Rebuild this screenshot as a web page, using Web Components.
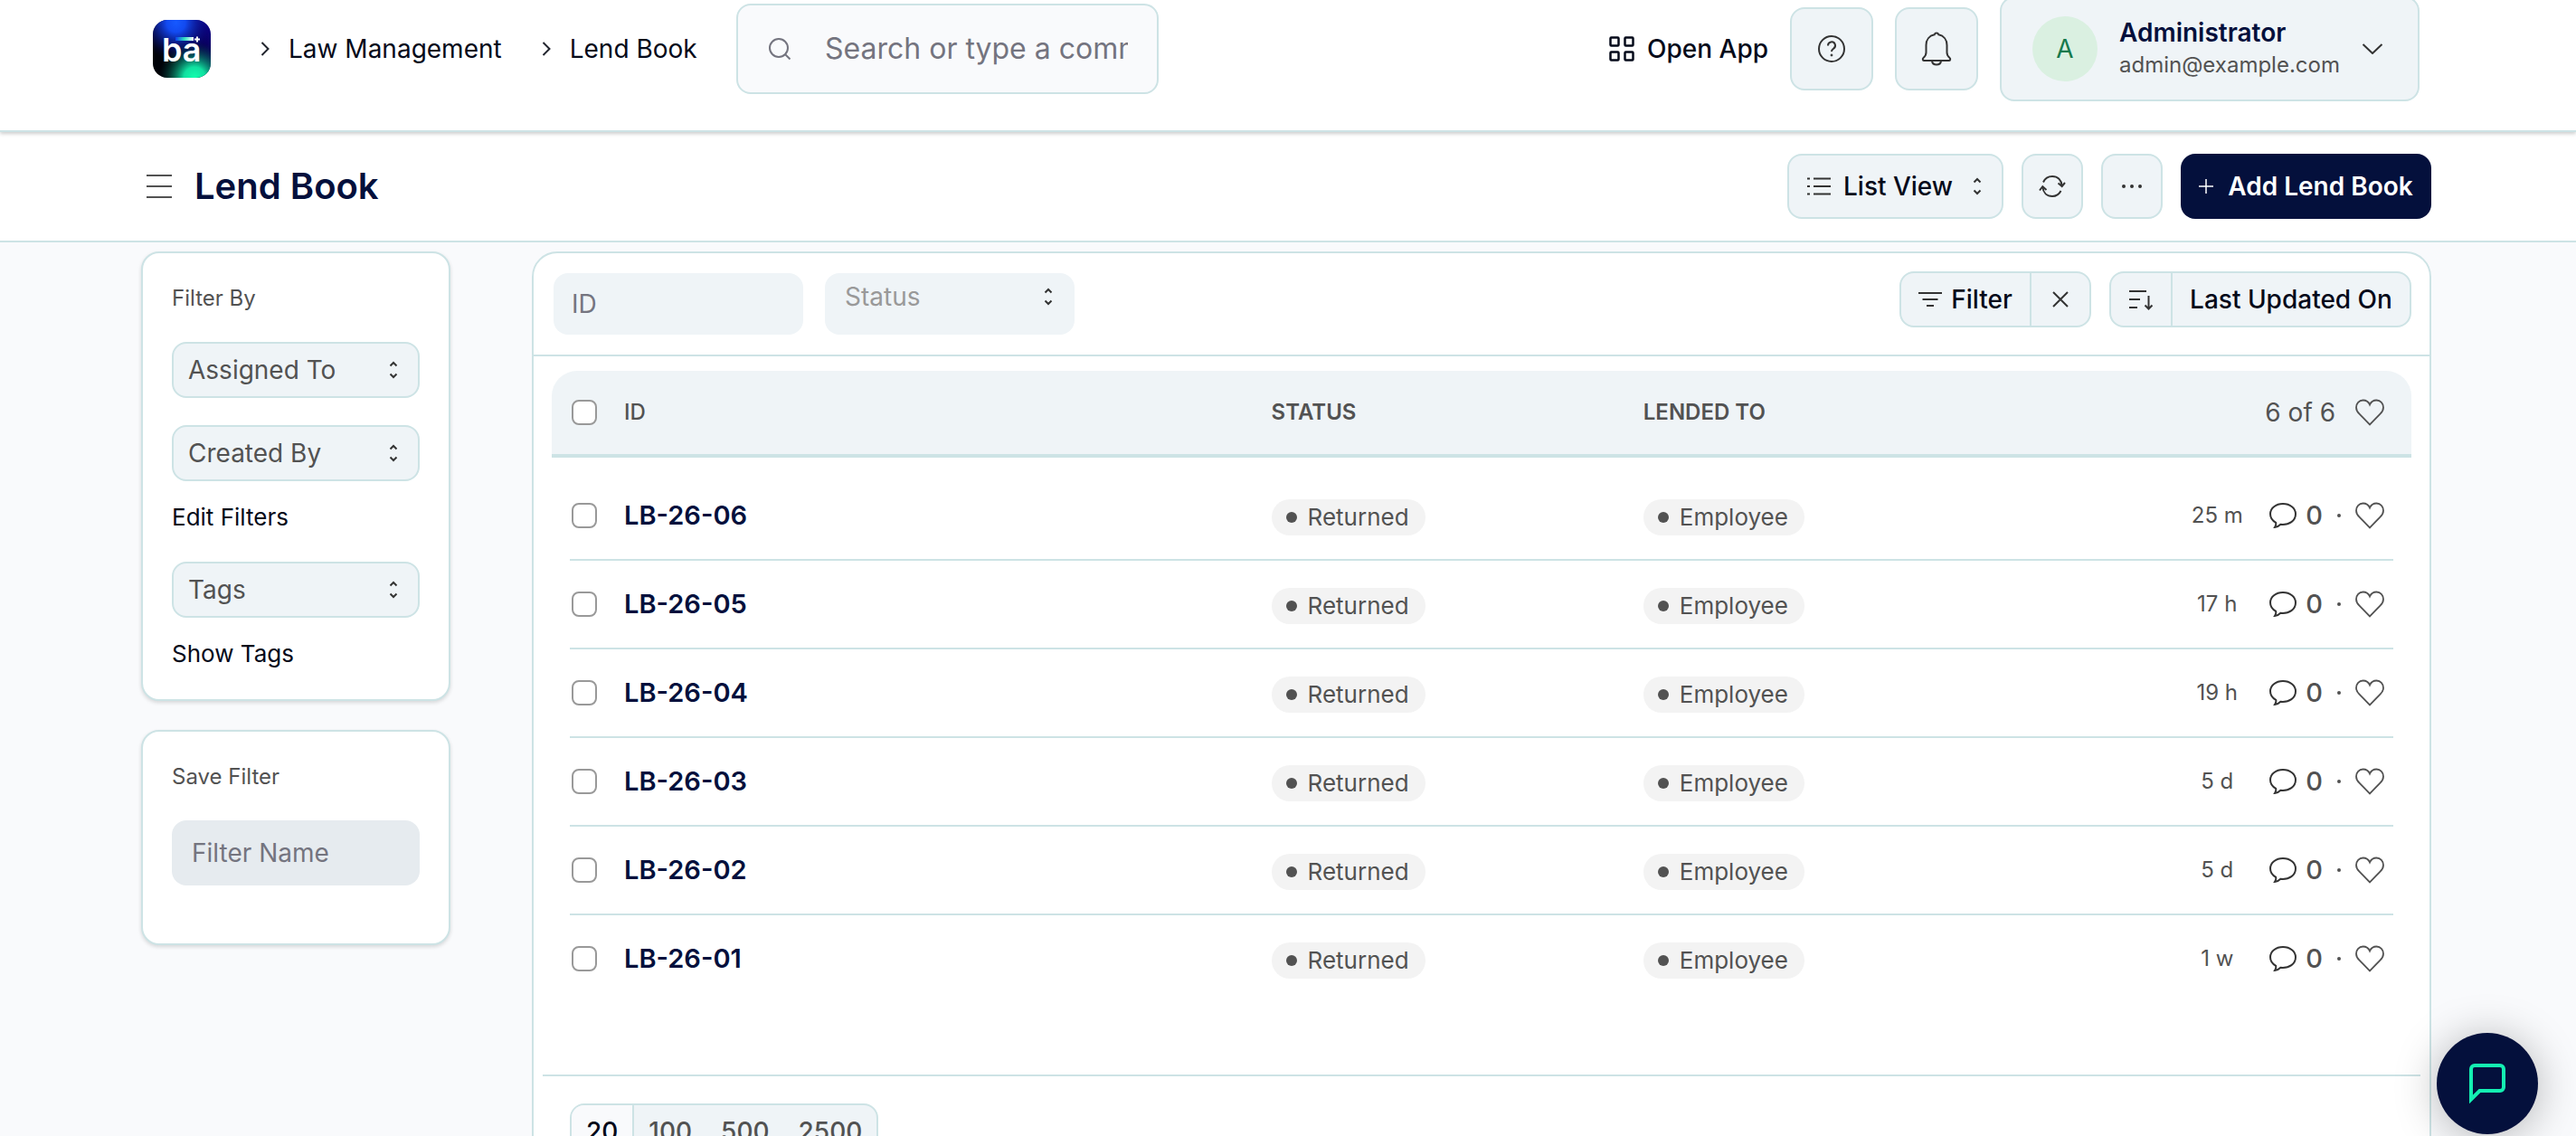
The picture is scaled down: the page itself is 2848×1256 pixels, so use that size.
<!DOCTYPE html>
<html lang="en">
<head>
<meta charset="utf-8">
<title>Lend Book</title>
<style>
  :root {
    --line: #cde3e5;
    --fill: #eff4f7;
    --page: #f9fafc;
    --navy: #04103c;
    --ink: #050a1a;
    --gray: #525252;
    --muted: #74747f;
    --radius: 16px;
  }
  body {
    margin: 0;
    height: 100vh;
    overflow: hidden;
    background: var(--page);
    color: var(--gray);
    font: 400 28px/32px Inter, "Liberation Sans", sans-serif;
  }
  .content {
    display: flex;
    align-items: flex-start;
    gap: 90px;
    padding: 10px 160px 0 156px;
  }
  aside {
    flex: 0 0 342px;
    display: grid;
    gap: 32px;
  }
</style>
</head>
<body>
  <lb-topbar>
    <lb-crumb href="#law">Law Management</lb-crumb>
    <lb-crumb href="#lend">Lend Book</lb-crumb>
  </lb-topbar>
  <lb-page-head>Lend Book</lb-page-head>
  <div class="content">
    <aside>
      <lb-panel heading="Filter By">
        <lb-select label="Assigned To"></lb-select>
        <lb-select label="Created By" class="next"></lb-select>
        <lb-link href="#filters">Edit Filters</lb-link>
        <lb-select label="Tags" class="tags"></lb-select>
        <lb-link href="#tags">Show Tags</lb-link>
      </lb-panel>
      <lb-panel heading="Save Filter">
        <lb-field label="Filter Name" class="save"></lb-field>
      </lb-panel>
    </aside>
    <lb-list></lb-list>
  </div>
  <lb-chat></lb-chat>

<script>
const ICONS = {
  chevron: [10, 16, `<path d="M1.5 1l7 7-7 7" stroke="#22252e"/>`],
  down: [24, 12, `<path d="M1.500 1L12 11 22.500 1"/>`],
  updown: [10, 20, `<path d="M1.500 5.500L5 2l3.500 3.500M1.500 14.500L5 18l3.500-3.500"/>`],
  search: [24, 24, `<circle cx="11" cy="11" r="10"/><path d="M18 18l5.500 5.500"/>`],
  grid: [28, 28, `<g stroke="#050a1a" stroke-width="2.500"><rect x="1.500" y="1.500" width="9" height="9" rx="1"/><rect x="17.500" y="1.500" width="9" height="9" rx="1"/><rect x="1.500" y="17.500" width="9" height="9" rx="1"/><rect x="17.500" y="17.500" width="9" height="9" rx="1"/></g>`],
  help: [30, 30, `<circle cx="15" cy="15" r="14"/><path d="M11 11.500a4 4 0 1 1 6 3.300c-1.400.8-2 1.500-2 3.200"/><circle cx="15" cy="22" r="1" fill="#333" stroke-width="1"/>`],
  bell: [34, 38, `<path d="M17 1.500c-1.300 0-2 .9-2.300 1.800C9 4.500 5.500 9 5.500 15v8c0 2.500-1 4.200-2.800 5.700-1.600 1.400-1 3.300.8 3.300h27c1.800 0 2.400-1.900.8-3.300-1.800-1.500-2.800-3.200-2.800-5.700v-8c0-6-3.500-10.500-9.200-11.700C19 2.400 18.300 1.500 17 1.500zM12 32.500c.4 2.600 2.400 4 5 4s4.600-1.400 5-4"/>`],
  menu: [30, 28, `<path d="M1 2h28M1 14h28M1 26h28" stroke="#525252"/>`],
  list: [26, 22, `<path d="M7 2.500h19M7 11h19M7 19.500h19"/><path d="M0 2.500h3M0 11h3M0 19.500h3"/>`],
  refresh: [30, 26, `<path d="M5 8.500C7 4 10.500 2 15 2c6 0 10 4 10.700 10.500M24.500 18c-2 4-5 6-9.500 6C9 24 5 20 4.300 14"/><path d="M21.500 9.500l4.200 3.500L29 9M8.500 17l-4.200-3.800L1 17.500"/>`],
  dots: [22, 4, `<g fill="#333" stroke="none"><circle cx="2" cy="2" r="2"/><circle cx="11" cy="2" r="2"/><circle cx="20" cy="2" r="2"/></g>`],
  plus: [16, 16, `<path d="M8 0v16M0 8h16" stroke="#fff" stroke-width="1.500"/>`],
  filter: [26, 18, `<path d="M0 2h26M4.500 9h17M9 16h8"/>`],
  close: [18, 18, `<path d="M1 1l16 16M17 1L1 17"/>`],
  sort: [28, 24, `<path d="M1 3h19M1 12h12M1 21h9M22.500 8v14M18.500 18.500l4 4 4-4"/>`],
  heart: [32, 30, `<path d="M16 6.500C14.500 3 11.500 1.500 8.500 1.500 4.200 1.500 1 5 1 9.500c0 3 1.300 5 3.500 7.200L16 28.500l11.500-11.800C29.700 14.500 31 12.500 31 9.500c0-4.500-3.200-8-7.500-8-3 0-6 1.500-7.500 5z" stroke="#525252" stroke-width="1.800"/>`],
  comment: [30, 28, `<path d="M15 1C7.200 1 1 5.700 1 12.200c0 4.600 2.600 7.600 6.200 9.600.6 1.800 0 3.400-1.200 5.200 2.800 0 4.600-1.400 6.400-3.200 9.800 1 16.600-4.400 16.600-11.600C29 5.700 22.800 1 15 1z"/>`],
  chat: [40, 44, `<path d="M2 39.500V6a4 4 0 0 1 4-4h28a4 4 0 0 1 4 4v20a4 4 0 0 1-4 4H11.500z" stroke="#14f0b2" stroke-width="4" stroke-linejoin="miter"/>`],
  logo: [64, 64, `
    <defs>
      <radialGradient id="blue" cx="40%" cy="5%" r="65%"><stop stop-color="#1659ff"/><stop offset=".25" stop-color="#124af0"/><stop offset="1" stop-color="#06006a" stop-opacity="0"/></radialGradient>
      <radialGradient id="green" cx="72%" cy="100%" r="62%"><stop stop-color="#12ffae"/><stop offset=".3" stop-color="#10e0a0"/><stop offset="1" stop-color="#004040" stop-opacity="0"/></radialGradient>
      <linearGradient id="base" x1="0" y1="1" x2="1" y2="0"><stop offset=".3" stop-color="#000208"/><stop offset="1" stop-color="#0d0090"/></linearGradient>
      <linearGradient id="bar"><stop stop-color="#0a3ff0"/><stop offset=".5" stop-color="#30e0c0"/><stop offset="1" stop-color="#fff"/></linearGradient>
    </defs>
    <g stroke="none">
      <rect width="64" height="64" rx="16" fill="url(#base)"/>
      <rect width="64" height="64" rx="16" fill="url(#blue)"/>
      <rect width="64" height="64" rx="16" fill="url(#green)"/>
      <text x="10" y="46" font-family="Inter, sans-serif" font-size="36" font-weight="600" fill="#fff">ba</text>
      <rect x="25" y="19" width="20" height="4" fill="url(#bar)"/>
    </g>
    <path d="M49 18.500v6M46 21.500h6" stroke="#fff"/>`],
};

// Attaches an open shadow root with the element's styles and markup.
class Base extends HTMLElement {
  connectedCallback() {
    if (!this.shadowRoot) this.attachShadow({ mode: "open" });
    this.shadowRoot.innerHTML = `
      <style>
        *, *::before { box-sizing: border-box; }
        button, input, select { font: inherit; color: inherit; margin: 0; }
        button { cursor: pointer; }
        a { color: inherit; text-decoration: none; }
        ${this.constructor.styles}
      </style>
      ${this.markup()}
    `;
  }
}

class Icon extends Base {
  static get styles() {
    return `
      :host { display: inline-flex; flex: none; }
      svg { display: block; fill: none; stroke: var(--icon, #333); stroke-width: 2; }
    `;
  }
  markup() {
    const [w, h, body] = ICONS[this.getAttribute("name")];
    return `<svg width="${w}" height="${h}" viewBox="0 0 ${w} ${h}" aria-hidden="true">${body}</svg>`;
  }
}
customElements.define("lb-icon", Icon);

class Crumb extends Base {
  static get styles() {
    return `
      :host { display: flex; align-items: center; gap: 21px; color: var(--ink); white-space: nowrap; }
    `;
  }
  markup() {
    return `<lb-icon name="chevron"></lb-icon><a href="${this.getAttribute("href")}"><slot></slot></a>`;
  }
}
customElements.define("lb-crumb", Crumb);

class TopBar extends Base {
  static get styles() {
    return `
      :host {
        display: block;
        position: relative;
        background: #fff;
        border-bottom: 2px solid var(--line);
        box-shadow: 0 2px 4px rgba(0, 0, 0, 0.2);
        padding: 0 173px 36px 169px;
      }
      .bar { display: flex; align-items: center; height: 108px; }
      .trail { display: flex; align-items: center; flex: 0 0 645px; }
      .home { display: flex; }
      .crumbs { display: flex; gap: 44px; margin-left: 55px; }
      .search {
        display: flex;
        align-items: center;
        gap: 38px;
        width: 467px;
        height: 100px;
        padding: 0 32px 0 34px;
        border: 2px solid var(--line);
        border-radius: var(--radius);
        background: var(--page);
        --icon: var(--muted);
      }
      .search input {
        flex: 1;
        min-width: 0;
        padding: 0;
        border: 0;
        outline: 0;
        background: none;
        font-size: 32px;
        line-height: 40px;
      }
      ::placeholder { color: var(--muted); opacity: 1; }
      .tools { display: flex; align-items: center; gap: 24px; margin-left: auto; }
      .open { display: flex; align-items: center; gap: 14px; color: var(--ink); font-weight: 500; }
      .tools button {
        display: grid;
        place-items: center;
        width: 92px;
        height: 92px;
        padding: 0;
        border: 2px solid var(--line);
        border-radius: var(--radius);
        background: var(--fill);
      }
      .tools .user {
        display: flex;
        align-items: center;
        width: 464px;
        height: 116px;
        padding: 0 38px 0 34px;
        text-align: left;
      }
      .avatar {
        display: grid;
        place-items: center;
        width: 72px;
        height: 72px;
        margin-right: 24px;
        border-radius: 50%;
        background: #daf0e1;
        color: #16794c;
      }
      .who { flex: 1; font-size: 24px; line-height: 36px; }
      .who b { display: block; font-size: 28px; font-weight: 600; color: var(--navy); }
    `;
  }
  markup() {
    return `
      <header class="bar">
        <nav class="trail" aria-label="Breadcrumb">
          <a class="home" href="#home" aria-label="Home"><lb-icon name="logo"></lb-icon></a>
          <div class="crumbs"><slot></slot></div>
        </nav>
        <label class="search">
          <lb-icon name="search"></lb-icon>
          <input type="text" placeholder="Search or type a command" aria-label="Search">
        </label>
        <div class="tools">
          <a class="open" href="#apps"><lb-icon name="grid"></lb-icon>Open App</a>
          <button aria-label="Help"><lb-icon name="help"></lb-icon></button>
          <button aria-label="Notifications"><lb-icon name="bell"></lb-icon></button>
          <button class="user">
            <span class="avatar">A</span>
            <span class="who"><b>Administrator</b>admin@example.com</span>
            <lb-icon name="down"></lb-icon>
          </button>
        </div>
      </header>
    `;
  }
}
customElements.define("lb-topbar", TopBar);

class Select extends Base {
  static get styles() {
    return `
      :host { display: block; }
      .wrap { display: grid; align-items: center; }
      .wrap > * { grid-area: 1 / 1; }
      select {
        appearance: none;
        width: 100%;
        height: 62px;
        padding: 0 50px 0 16px;
        border: 2px solid var(--line);
        border-radius: var(--radius);
        background: var(--fill);
      }
      lb-icon { justify-self: end; margin-right: 24px; pointer-events: none; }
      lb-icon.lead { justify-self: start; margin-left: 22px; }
      :host(.view) select { height: 72px; width: 239px; padding-left: 60px; color: var(--ink); font-weight: 500; }
      :host(.plain) .wrap { height: 68px; padding-bottom: 16px; border-radius: var(--radius); background: var(--fill); }
      :host(.plain) select { height: 52px; padding-left: 22px; border: 0; background: none; color: #999; }
    `;
  }
  markup() {
    const label = this.getAttribute("label");
    const lead = this.getAttribute("icon");
    return `
      <div class="wrap">
        <select aria-label="${label}"><option>${label}</option></select>
        ${lead ? `<lb-icon class="lead" name="${lead}"></lb-icon>` : ""}
        <lb-icon name="updown"></lb-icon>
      </div>
    `;
  }
}
customElements.define("lb-select", Select);

class Field extends Base {
  static get styles() {
    return `
      :host { display: block; }
      input {
        display: block;
        width: 100%;
        height: 68px;
        padding: 0 20px;
        border: 0;
        border-radius: var(--radius);
        background: var(--fill);
      }
      ::placeholder { color: var(--muted); opacity: 1; }
      :host(.save) input { height: 72px; padding: 0 22px; background: #e6ebef; }
    `;
  }
  markup() {
    const label = this.getAttribute("label");
    return `<input type="text" placeholder="${label}" aria-label="${label}">`;
  }
}
customElements.define("lb-field", Field);

class Link extends Base {
  static get styles() {
    return `:host { display: block; color: var(--ink); font-size: 26px; }`;
  }
  markup() {
    return `<a href="${this.getAttribute("href")}"><slot></slot></a>`;
  }
}
customElements.define("lb-link", Link);

class PageHead extends Base {
  static get styles() {
    return `
      :host {
        display: flex;
        align-items: center;
        height: 120px;
        padding: 0 160px 0 161px;
        border-bottom: 2px solid var(--line);
        background: #fff;
      }
      .menu { padding: 0; border: 0; background: none; display: flex; }
      h1 { margin: 0 auto 0 24px; font-size: 40px; line-height: 48px; font-weight: 600; color: var(--navy); }
      .actions { display: flex; gap: 20px; }
      .square, .add {
        display: flex;
        align-items: center;
        justify-content: center;
        width: 68px;
        height: 72px;
        padding: 0;
        border: 2px solid var(--line);
        border-radius: var(--radius);
        background: var(--fill);
      }
      .add { width: 277px; gap: 16px; border: 0; background: var(--navy); color: #fff; font-weight: 600; }
    `;
  }
  markup() {
    return `
      <button class="menu" aria-label="Toggle sidebar"><lb-icon name="menu"></lb-icon></button>
      <h1><slot></slot></h1>
      <div class="actions">
        <lb-select class="view" label="List View" icon="list"></lb-select>
        <button class="square" aria-label="Refresh"><lb-icon name="refresh"></lb-icon></button>
        <button class="square" aria-label="More"><lb-icon name="dots"></lb-icon></button>
        <button class="add"><lb-icon name="plus"></lb-icon>Add Lend Book</button>
      </div>
    `;
  }
}
customElements.define("lb-page-head", PageHead);

class Panel extends Base {
  static get styles() {
    return `
      :host {
        display: block;
        box-sizing: border-box;
        padding: 34px 32px;
        border: 2px solid var(--line);
        border-radius: 20px;
        background: #fff;
        box-shadow: 0 2px 4px rgba(0, 0, 0, 0.14);
      }
      h2 { margin: 0 0 32px; font-size: 24px; line-height: 32px; font-weight: 400; }
      ::slotted(lb-link) { margin-top: 24px; }
      ::slotted(.next) { margin-top: 30px; }
      ::slotted(.tags) { margin-top: 33px; }
      ::slotted(.save) { margin-bottom: 30px; }
    `;
  }
  markup() {
    return `<h2>${this.getAttribute("heading")}</h2><slot></slot>`;
  }
}
customElements.define("lb-panel", Panel);

class Pill extends Base {
  static get styles() {
    return `
      :host {
        display: inline-flex;
        align-items: center;
        gap: 12px;
        height: 40px;
        padding: 0 18px 0 16px;
        border-radius: 20px;
        background: #f3f3f3;
        font-size: 26px;
        vertical-align: middle;
      }
      i { width: 12px; height: 12px; border-radius: 50%; background: var(--gray); }
    `;
  }
  markup() {
    return `<i></i><slot></slot>`;
  }
}
customElements.define("lb-pill", Pill);

class List extends Base {
  static get styles() {
    return `
      :host {
        display: block;
        flex: 1;
        min-width: 0;
        box-sizing: border-box;
        border: 2px solid var(--line);
        border-radius: 28px;
        background: #fff;
      }
      .tools {
        display: flex;
        align-items: flex-start;
        gap: 24px;
        padding: 22px 20px 22px 22px;
        border-bottom: 2px solid var(--line);
      }
      .tools > lb-field, .tools > lb-select { width: 276px; }
      .group {
        display: flex;
        height: 62px;
        box-sizing: border-box;
        border: 2px solid var(--line);
        border-radius: var(--radius);
        background: var(--fill);
        color: var(--ink);
        font-weight: 500;
        overflow: hidden;
        margin-top: -2px;
      }
      .filter { margin-left: auto; margin-right: -4px; }
      .group button { display: flex; align-items: center; justify-content: center; gap: 10px; min-width: 142px; padding: 0 10px; border: 0; background: none; white-space: nowrap; }
      .group button + button { border-left: 2px solid var(--line); }
      .group .icon { width: 66px; min-width: 0; padding: 0; }
      .group .by { width: 264px; }

      .scroll { padding: 16px 20px 78px; }
      table { width: 100%; table-layout: fixed; border-collapse: separate; border-spacing: 0; }
      th, td { padding: 0; text-align: left; vertical-align: middle; }
      thead th {
        height: 96px;
        border-bottom: 4px solid var(--line);
        background: var(--fill);
        font-size: 24px;
        font-weight: 600;
      }
      thead th:first-child { border-top-left-radius: 28px; }
      thead th:last-child { border-top-right-radius: 28px; }
      thead th.id { font-weight: 500; }
      .id { padding-left: 4px; }
      .check { width: 76px; padding-left: 22px; }
      .id-col { width: 35%; }
      .mid { width: 20%; }
      tbody::before { content: ""; display: table-row; height: 16px; }
      tbody td { height: 98px; padding-bottom: 2px; }
      tbody td.pill { padding: 2px 0 0; }
      tbody tr:not(:last-child) {
        background: linear-gradient(var(--line), var(--line)) 20px 100% / calc(100% - 40px) 2px no-repeat;
      }
      td a { color: var(--navy); font-weight: 600; font-size: 29px; }
      input[type="checkbox"] {
        appearance: none;
        display: block;
        width: 28px;
        height: 28px;
        border: 2px solid #999;
        border-radius: 8px;
        background: #fff;
      }
      .side { display: flex; align-items: center; justify-content: flex-end; padding-right: 30px; }
      .count { font-size: 28px; font-weight: 400; margin-right: 22px; }
      .age { width: 80px; margin-right: 18px; text-align: center; font-size: 24px; }
      .num { margin: 0 16px 0 10px; font-weight: 500; font-size: 29px; }
      .sep { width: 4px; height: 4px; border-radius: 50%; background: var(--gray); margin-right: 16px; }
      .like { display: flex; padding: 0; border: 0; background: none; }

      footer { margin: 0 10px; padding: 30px; border-top: 2px solid var(--line); }
      .pager {
        display: inline-flex;
        height: 62px;
        border: 2px solid var(--line);
        border-radius: var(--radius);
        background: var(--fill);
        overflow: hidden;
      }
      .pager button { padding: 0 16px; border: 0; background: none; font-weight: 500; }
      .pager .on { border-right: 2px solid var(--line); background: var(--page); color: var(--ink); }
    `;
  }
  markup() {
    const rows = [
      ["LB-26-06", "25 m"],
      ["LB-26-05", "17 h"],
      ["LB-26-04", "19 h"],
      ["LB-26-03", "5 d"],
      ["LB-26-02", "5 d"],
      ["LB-26-01", "1 w"],
    ];
    return `
      <div class="tools">
        <lb-field label="ID"></lb-field>
        <lb-select class="plain" label="Status"></lb-select>
        <div class="group filter">
          <button><lb-icon name="filter"></lb-icon>Filter</button>
          <button class="icon" aria-label="Clear filters"><lb-icon name="close"></lb-icon></button>
        </div>
        <div class="group">
          <button class="icon" aria-label="Sort direction"><lb-icon name="sort"></lb-icon></button>
          <button class="by">Last Updated On</button>
        </div>
      </div>
      <div class="scroll">
        <table>
          <thead>
            <tr>
              <th class="check"><input type="checkbox" aria-label="Select all"></th>
              <th class="id id-col">ID</th>
              <th class="mid">STATUS</th>
              <th class="mid">LENDED TO</th>
              <th><div class="side">
                <span class="count">6 of 6</span>
                <button class="like" aria-label="Liked"><lb-icon name="heart"></lb-icon></button>
              </div></th>
            </tr>
          </thead>
          <tbody>
            ${rows.map(([id, age]) => `
              <tr>
                <td class="check"><input type="checkbox" aria-label="Select ${id}"></td>
                <td class="id"><a href="#${id}">${id}</a></td>
                <td class="pill"><lb-pill>Returned</lb-pill></td>
                <td class="pill"><lb-pill>Employee</lb-pill></td>
                <td><div class="side">
                  <span class="age">${age}</span>
                  <lb-icon name="comment"></lb-icon>
                  <span class="num">0</span>
                  <i class="sep"></i>
                  <button class="like" aria-label="Like ${id}"><lb-icon name="heart"></lb-icon></button>
                </div></td>
              </tr>
            `).join("")}
          </tbody>
        </table>
      </div>
      <footer>
        <div class="pager">
          <button class="on">20</button>
          <button>100</button>
          <button>500</button>
          <button>2500</button>
        </div>
      </footer>
    `;
  }
}
customElements.define("lb-list", List);

class Chat extends Base {
  static get styles() {
    return `
      :host { position: fixed; right: 42px; bottom: 2px; }
      button {
        display: grid;
        place-items: center;
        width: 112px;
        height: 112px;
        padding: 0;
        border: 0;
        border-radius: 50%;
        background: var(--navy);
        box-shadow: 0 4px 48px rgba(0, 0, 0, 0.28);
      }
    `;
  }
  markup() {
    return `<button aria-label="Open chat"><lb-icon name="chat"></lb-icon></button>`;
  }
}
customElements.define("lb-chat", Chat);
</script>
</body>
</html>
